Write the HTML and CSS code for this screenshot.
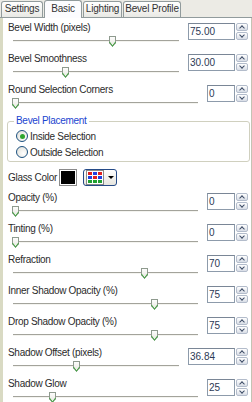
FILE: index.html
```html
<!DOCTYPE html>
<html lang="en">
<head>
    <meta charset="UTF-8">
    <title>Bevel Settings</title>
    <link rel="stylesheet" href="styles.css">
</head>
<body>
    <div class="panel">
        <div class="tabs">
            <div class="tab tab-settings">Settings</div>
            <div class="tab tab-basic selected">Basic</div>
            <div class="tab tab-lighting">Lighting</div>
            <div class="tab tab-profile">Bevel Profile</div>
        </div>

        <div class="page">
            <div class="row">
                <div class="field">
                    <div class="label">Bevel Width (pixels)</div>
                    <div class="slider"><div class="thumb" style="left:96px"></div></div>
                </div>
                <div class="spin">
                    <div class="spin-box wide">75.00</div>
                    <div class="arrows"><div class="arrow up"></div><div class="arrow down"></div></div>
                </div>
            </div>
            <div class="row">
                <div class="field">
                    <div class="label">Bevel Smoothness</div>
                    <div class="slider"><div class="thumb" style="left:49px"></div></div>
                </div>
                <div class="spin">
                    <div class="spin-box wide">30.00</div>
                    <div class="arrows"><div class="arrow up"></div><div class="arrow down"></div></div>
                </div>
            </div>
            <div class="row">
                <div class="field">
                    <div class="label">Round Selection Corners</div>
                    <div class="slider"><div class="thumb" style="left:-1px"></div></div>
                </div>
                <div class="spin">
                    <div class="spin-box">0</div>
                    <div class="arrows"><div class="arrow up"></div><div class="arrow down"></div></div>
                </div>
            </div>

            <fieldset class="group">
                <legend>Bevel Placement</legend>
                <div class="radio-row"><span class="radio checked"></span>Inside Selection</div>
                <div class="radio-row"><span class="radio"></span>Outside Selection</div>
            </fieldset>

            <div class="glass-row">
                <span class="glass-label">Glass Color</span>
                <span class="swatch"></span>
                <span class="color-button">
                    <span class="palette">
                        <i class="red"></i><i class="blue"></i><i class="red"></i>
                        <i class="blue"></i><i class="red"></i><i class="blue"></i>
                        <i class="green"></i><i class="green"></i><i class="green"></i>
                    </span>
                    <span class="drop"></span>
                </span>
            </div>

            <div class="row">
                <div class="field">
                    <div class="label">Opacity (%)</div>
                    <div class="slider"><div class="thumb" style="left:-1px"></div></div>
                </div>
                <div class="spin">
                    <div class="spin-box">0</div>
                    <div class="arrows"><div class="arrow up"></div><div class="arrow down"></div></div>
                </div>
            </div>
            <div class="row">
                <div class="field">
                    <div class="label">Tinting (%)</div>
                    <div class="slider"><div class="thumb" style="left:-1px"></div></div>
                </div>
                <div class="spin">
                    <div class="spin-box">0</div>
                    <div class="arrows"><div class="arrow up"></div><div class="arrow down"></div></div>
                </div>
            </div>
            <div class="row">
                <div class="field">
                    <div class="label">Refraction</div>
                    <div class="slider"><div class="thumb" style="left:128px"></div></div>
                </div>
                <div class="spin">
                    <div class="spin-box">70</div>
                    <div class="arrows"><div class="arrow up"></div><div class="arrow down"></div></div>
                </div>
            </div>
            <div class="row">
                <div class="field">
                    <div class="label">Inner Shadow Opacity (%)</div>
                    <div class="slider"><div class="thumb" style="left:138px"></div></div>
                </div>
                <div class="spin">
                    <div class="spin-box">75</div>
                    <div class="arrows"><div class="arrow up"></div><div class="arrow down"></div></div>
                </div>
            </div>
            <div class="row">
                <div class="field">
                    <div class="label">Drop Shadow Opacity (%)</div>
                    <div class="slider"><div class="thumb" style="left:138px"></div></div>
                </div>
                <div class="spin">
                    <div class="spin-box">75</div>
                    <div class="arrows"><div class="arrow up"></div><div class="arrow down"></div></div>
                </div>
            </div>
            <div class="row">
                <div class="field">
                    <div class="label">Shadow Offset (pixels)</div>
                    <div class="slider"><div class="thumb" style="left:60px"></div></div>
                </div>
                <div class="spin">
                    <div class="spin-box wide">36.84</div>
                    <div class="arrows"><div class="arrow up"></div><div class="arrow down"></div></div>
                </div>
            </div>
            <div class="row">
                <div class="field">
                    <div class="label">Shadow Glow</div>
                    <div class="slider"><div class="thumb" style="left:36px"></div></div>
                </div>
                <div class="spin">
                    <div class="spin-box">25</div>
                    <div class="arrows"><div class="arrow up"></div><div class="arrow down"></div></div>
                </div>
            </div>
        </div>
    </div>
</body>
</html>
```

FILE: styles.css
```css
body {
    margin: 0;
    font-family: "Liberation Sans", Arial, sans-serif;
    font-size: 10px;
    color: #2b2b2b;
}
.panel {
    width: 252px;
    height: 402px;
    display: flex;
    flex-direction: column;
    overflow: hidden;
    background: #fff;
}

/* tab strip */
.tabs {
    display: flex;
    align-items: flex-end;
    height: 18px;
    box-sizing: border-box;
    padding-left: 1px;
    background: #ecebe5;
    border-bottom: 1px solid #919b9c;
}
.tab {
    height: 16px;
    box-sizing: border-box;
    border: 1px solid #919b9c;
    border-bottom: none;
    border-radius: 3px 3px 0 0;
    background: linear-gradient(#ffffff, #e9e9e4);
    text-align: center;
    line-height: 14px;
    letter-spacing: -0.2px;
    margin-right: 1px;
    color: #333;
}
.tab.selected {
    height: 18px;
    margin-bottom: -1px;
    background: #fcfcfe;
    line-height: 15px;
}
.tab-settings { width: 42px; }
.tab-basic { width: 38px; }
.tab-lighting { width: 39px; }
.tab-profile { width: 58px; }

/* page */
.page {
    flex: 1;
    padding: 3px 3px 0 5px;
    border-left: 3px solid #d9dac3;
    border-right: 1px solid #c4c3b4;
}
.row {
    display: flex;
    height: 31px;
}
.field {
    flex: 1;
    min-width: 0;
}
.label {
    height: 14px;
    line-height: 14px;
    letter-spacing: -0.3px;
    white-space: nowrap;
}
.slider {
    position: relative;
    height: 12px;
    margin: 0 9px 0 5px;
}
.slider::before {
    content: "";
    position: absolute;
    left: 0;
    right: 0;
    top: 5px;
    height: 1px;
    background: #a3a39b;
    border-bottom: 1px solid #f4f4f0;
}
.thumb {
    position: absolute;
    top: 1px;
    width: 7px;
    height: 11px;
    background: linear-gradient(#ffffff, #e4e4dc);
    clip-path: polygon(0 0, 100% 0, 100% 65%, 50% 100%, 0 65%);
}
.thumb::before {
    content: "";
    position: absolute;
    inset: 0;
    background: #8e9a8e;
    clip-path: polygon(0 0, 100% 0, 100% 65%, 50% 100%, 0 65%, 0 0, 1px 1px, 1px 62%, 50% calc(100% - 1.5px), calc(100% - 1px) 62%, calc(100% - 1px) 1px, 1px 1px);
}
.thumb::after {
    content: "";
    position: absolute;
    left: 0;
    right: 0;
    bottom: 0;
    height: 5px;
    background: #3aa23a;
    clip-path: polygon(0 0, 1px 0, 50% calc(100% - 1.5px), calc(100% - 1px) 0, 100% 0, 50% 100%);
}

/* spin boxes */
.spin {
    display: flex;
    gap: 1px;
    margin-top: 2px;
    height: 17px;
}
.spin-box {
    width: 28px;
    height: 17px;
    box-sizing: border-box;
    border: 1px solid #8d9bab;
    border-top-color: #7a8696;
    padding-left: 1px;
    line-height: 15px;
    color: #2c3a55;
    background: #fff;
}
.spin-box.wide {
    width: 47px;
}
.arrows {
    width: 12px;
    display: flex;
    flex-direction: column;
    gap: 1px;
}
.arrow {
    flex: 1;
    position: relative;
    border: 1px solid #b3bccb;
    border-radius: 2px;
    background: linear-gradient(#ffffff, #d8dde6);
}
.arrow::after {
    content: "";
    position: absolute;
    left: 3px;
    width: 3px;
    height: 3px;
    border-left: 1.5px solid #3d4c66;
    border-top: 1.5px solid #3d4c66;
}
.arrow.up::after {
    top: 2px;
    transform: rotate(45deg);
}
.arrow.down::after {
    top: 0;
    transform: rotate(225deg);
}

/* bevel placement group */
.group {
    margin: 1px -2px 0 -1px;
    padding: 1px 0 1px 6px;
    border: 1px solid #d0d0bf;
    border-radius: 3px;
}
.group legend {
    padding: 0 2px;
    line-height: 12px;
    color: #1a44d0;
    letter-spacing: -0.3px;
}
.radio-row {
    display: flex;
    align-items: center;
    height: 16px;
    gap: 2px;
    margin-left: 2px;
    letter-spacing: -0.3px;
}
.radio {
    width: 12px;
    height: 12px;
    box-sizing: border-box;
    border: 1px solid #1c5180;
    border-radius: 50%;
    background: radial-gradient(circle at 65% 65%, #ffffff, #dcdcd5);
    position: relative;
}
.radio.checked::after {
    content: "";
    position: absolute;
    left: 2.5px;
    top: 2.5px;
    width: 5px;
    height: 5px;
    border-radius: 50%;
    background: #2fa62f;
}

/* glass colour */
.glass-row {
    display: flex;
    align-items: center;
    height: 17px;
    margin: 7px 0 5px;
}
.glass-label {
    width: 51px;
    letter-spacing: -0.3px;
    white-space: nowrap;
}
.swatch {
    width: 18px;
    height: 17px;
    box-sizing: border-box;
    border: 1px solid #8a8a8a;
    outline: 1px solid #fff;
    outline-offset: -2px;
    background: #000;
}
.color-button {
    margin-left: 6px;
    width: 34px;
    height: 17px;
    box-sizing: border-box;
    border: 1px solid #254a86;
    border-radius: 3px;
    background: linear-gradient(#ffffff, #e6e5de);
    display: flex;
    align-items: center;
    padding-left: 2px;
    gap: 4px;
}
.palette {
    display: grid;
    grid-template-columns: repeat(3, 4px);
    grid-auto-rows: 3px;
    gap: 1px;
    padding: 1px;
    background: #fff;
    border: 1px solid #8a8a8a;
}
.palette i { display: block; }
.palette .red { background: #e02020; }
.palette .blue { background: #2040e0; }
.palette .green { background: #20a030; }
.drop {
    flex: none;
    width: 0;
    height: 0;
    border-left: 3px solid transparent;
    border-right: 3px solid transparent;
    border-top: 3px solid #000;
}
```
